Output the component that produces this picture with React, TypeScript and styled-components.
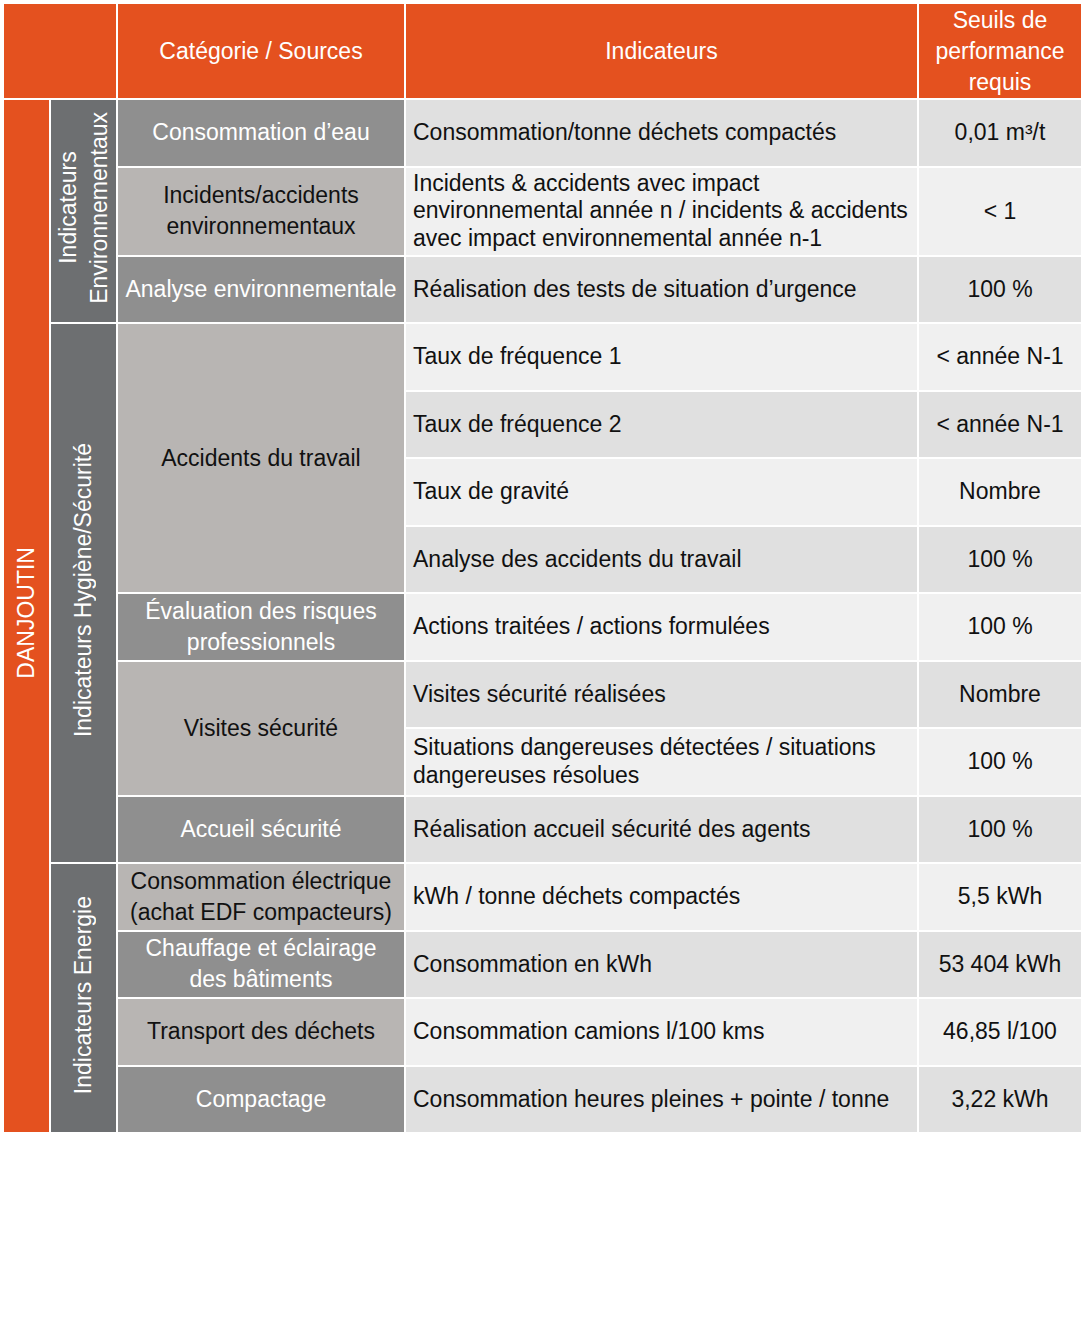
import styled, { createGlobalStyle } from "styled-components";

const GlobalStyle = createGlobalStyle`
  body {
    margin: 0;
    background: #ffffff;
    font-family: "Liberation Sans", Arial, sans-serif;
  }
`;

const Page = styled.div`
  padding: 2px;
`;

const Table = styled.table`
  border-collapse: separate;
  border-spacing: 2px;
  table-layout: fixed;
  width: 1081px;
  font-size: 23px;
`;

const HeadCell = styled.th`
  background: #e4511f;
  color: #ffffff;
  font-weight: normal;
  height: 94px;
  padding: 0 2px;
  line-height: 31px;
  text-align: center;
  vertical-align: middle;
`;

const SideCell = styled.td<{ bg: string }>`
  background: ${(p) => p.bg};
  color: #ffffff;
  padding: 0;
  text-align: center;
  vertical-align: middle;
`;

const Vertical = styled.span`
  display: inline-block;
  writing-mode: vertical-rl;
  transform: rotate(180deg);
  line-height: 31px;
  white-space: nowrap;
`;

const CategoryCell = styled.td<{ dark?: boolean }>`
  background: ${(p) => (p.dark ? "#8f8f8f" : "#b8b5b3")};
  color: ${(p) => (p.dark ? "#ffffff" : "#111111")};
  padding: 0 2px;
  line-height: 31px;
  text-align: center;
  vertical-align: middle;
  white-space: nowrap;
`;

const IndicatorCell = styled.td<{ shade?: boolean; tall?: boolean }>`
  background: ${(p) => (p.shade ? "#e0e0e0" : "#f0f0f0")};
  color: #111111;
  height: ${(p) => (p.tall ? "87px" : "65.5px")};
  padding: 0 2px 0 7px;
  line-height: 27.5px;
  vertical-align: middle;
  white-space: nowrap;
`;

const ThresholdCell = styled.td<{ shade?: boolean }>`
  background: ${(p) => (p.shade ? "#e0e0e0" : "#f0f0f0")};
  color: #111111;
  padding: 0;
  text-align: center;
  vertical-align: middle;
  white-space: nowrap;
`;

type Row = { indicator: React.ReactNode; threshold: React.ReactNode; tall?: boolean };

const rows: Row[] = [
  { indicator: "Consommation/tonne déchets compactés", threshold: <>0,01 m³/t</> },
  {
    indicator: (
      <>
        Incidents &amp; accidents avec impact
        <br />
        environnemental année n / incidents &amp; accidents
        <br />
        avec impact environnemental année n-1
      </>
    ),
    threshold: "< 1",
    tall: true,
  },
  { indicator: "Réalisation des tests de situation d’urgence", threshold: "100 %" },
  { indicator: "Taux de fréquence 1", threshold: "< année N-1" },
  { indicator: "Taux de fréquence 2", threshold: "< année N-1" },
  { indicator: "Taux de gravité", threshold: "Nombre" },
  { indicator: "Analyse des accidents du travail", threshold: "100 %" },
  { indicator: "Actions traitées / actions formulées", threshold: "100 %" },
  { indicator: "Visites sécurité réalisées", threshold: "Nombre" },
  {
    indicator: (
      <>
        Situations dangereuses détectées / situations
        <br />
        dangereuses résolues
      </>
    ),
    threshold: "100 %",
  },
  { indicator: "Réalisation accueil sécurité des agents", threshold: "100 %" },
  { indicator: "kWh / tonne déchets compactés", threshold: "5,5 kWh" },
  { indicator: "Consommation en kWh", threshold: "53 404 kWh" },
  { indicator: "Consommation camions l/100 kms", threshold: "46,85 l/100" },
  { indicator: "Consommation heures pleines + pointe / tonne", threshold: "3,22 kWh" },
];

// category cells keyed by the row they start on
const categories: Record<number, { label: React.ReactNode; span?: number; dark?: boolean }> = {
  0: { label: "Consommation d’eau", dark: true },
  1: { label: <>Incidents/accidents<br />environnementaux</> },
  2: { label: "Analyse environnementale", dark: true },
  3: { label: "Accidents du travail", span: 4 },
  7: { label: <>Évaluation des risques<br />professionnels</>, dark: true },
  8: { label: "Visites sécurité", span: 2 },
  10: { label: "Accueil sécurité", dark: true },
  11: { label: <>Consommation électrique<br />(achat EDF compacteurs)</> },
  12: { label: <>Chauffage et éclairage<br />des bâtiments</>, dark: true },
  13: { label: "Transport des déchets" },
  14: { label: "Compactage", dark: true },
};

const groups: Record<number, { label: React.ReactNode; span: number }> = {
  0: { label: <>Indicateurs<br />Environnementaux</>, span: 3 },
  3: { label: "Indicateurs Hygiène/Sécurité", span: 8 },
  11: { label: "Indicateurs Energie", span: 4 },
};

export default function App() {
  return (
    <>
      <GlobalStyle />
      <Page>
        <Table>
          <colgroup>
            <col style={{ width: 45 }} />
            <col style={{ width: 65 }} />
            <col style={{ width: 286 }} />
            <col style={{ width: 511 }} />
            <col style={{ width: 162 }} />
          </colgroup>
          <thead>
            <tr>
              <HeadCell colSpan={2} />
              <HeadCell>Catégorie / Sources</HeadCell>
              <HeadCell>Indicateurs</HeadCell>
              <HeadCell>
                Seuils de
                <br />
                performance
                <br />
                requis
              </HeadCell>
            </tr>
          </thead>
          <tbody>
            {rows.map((row, i) => {
              const shade = i % 2 === 0;
              const group = groups[i];
              const cat = categories[i];
              return (
                <tr key={i}>
                  {i === 0 && (
                    <SideCell bg="#e4511f" rowSpan={rows.length}>
                      <Vertical>DANJOUTIN</Vertical>
                    </SideCell>
                  )}
                  {group && (
                    <SideCell bg="#6d6f71" rowSpan={group.span}>
                      <Vertical>{group.label}</Vertical>
                    </SideCell>
                  )}
                  {cat && (
                    <CategoryCell dark={cat.dark} rowSpan={cat.span}>
                      {cat.label}
                    </CategoryCell>
                  )}
                  <IndicatorCell shade={shade} tall={row.tall}>
                    {row.indicator}
                  </IndicatorCell>
                  <ThresholdCell shade={shade}>{row.threshold}</ThresholdCell>
                </tr>
              );
            })}
          </tbody>
        </Table>
      </Page>
    </>
  );
}
